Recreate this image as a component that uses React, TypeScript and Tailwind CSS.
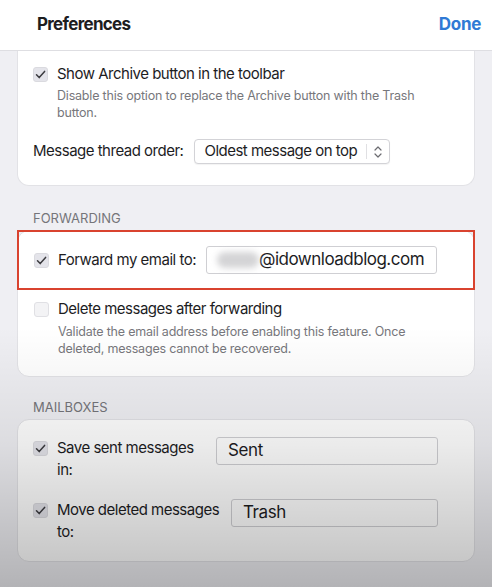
import React from "react";

const Check = ({ checked = true }: { checked?: boolean }) => (
  <div
    className={
      "w-[15px] h-[15px] shrink-0 rounded-[3px] border flex items-center justify-center " +
      (checked ? "bg-[#e4e4ea] border-[#dadadf]" : "bg-[#f3f3f5] border-[#e0e0e4]")
    }
  >
    {checked && (
      <svg width="13" height="13" viewBox="0 0 13 13" fill="none">
        <path d="M2.5 6.8 L5.2 9.6 L10.6 3.4" stroke="#3c3c40" strokeWidth="1.5" strokeLinecap="round" strokeLinejoin="round" />
      </svg>
    )}
  </div>
);

export default function App() {
  return (
    <div
      className="relative w-[492px] h-[587px] overflow-hidden bg-[#efeff3] text-[#1d1d1f]"
      style={{ fontFamily: "Inter, 'Liberation Sans', sans-serif" }}
    >
      <header className="h-[51px] bg-white border-b border-[#dedee2] flex items-center justify-between pl-[37px] pr-[11px]">
        <h1 className="text-[17px] font-bold tracking-[-0.7px]">Preferences</h1>
        <span className="text-[17px] font-bold text-[#2f7ad5] tracking-[-0.3px]">Done</span>
      </header>

      <div className="px-[17px]">
        {/* Card 1 */}
        <section className="bg-white rounded-b-[12px] border-x border-b border-[#e2e2e6] pl-[15px] pr-[20px] pt-[12px] pb-[21px]">
          <div className="flex items-center gap-[9px] h-[22px]">
            <Check />
            <span className="text-[15px] tracking-[-0.5px]">Show Archive button in the toolbar</span>
          </div>
          <p className="pl-[24px] pr-[20px] mt-[2px] text-[12.5px] leading-[17px] text-[#77777c] tracking-[-0.2px]">
            Disable this option to replace the Archive button with the Trash button.
          </p>
          <div className="flex items-center gap-[11px] mt-[18px]">
            <span className="text-[15px] tracking-[-0.5px]">Message thread order:</span>
            <div className="h-[25px] w-[196px] border border-[#d3d3d7] rounded-[4px] bg-white flex items-center pl-[9px] pr-[6px] shadow-[0_1px_1px_rgba(0,0,0,0.05)]">
              <span className="text-[15px] flex-1 tracking-[-0.5px] whitespace-nowrap">Oldest message on top</span>
              <div className="w-px h-[15px] bg-[#e0e0e3] mr-[6px]" />
              <svg width="10" height="14" viewBox="0 0 10 14" fill="none">
                <path d="M2 5 L5 2 L8 5" stroke="#6b6b70" strokeWidth="1.2" strokeLinecap="round" strokeLinejoin="round" />
                <path d="M2 9 L5 12 L8 9" stroke="#6b6b70" strokeWidth="1.2" strokeLinecap="round" strokeLinejoin="round" />
              </svg>
            </div>
          </div>
        </section>

        <div className="pl-[16px] pt-[23px] pb-[5px] text-[13px] text-[#75757a] tracking-[0px] h-[44px]">FORWARDING</div>

        {/* Card 2 */}
        <section className="bg-white rounded-[12px] border border-[#e2e2e6] pb-[19px]">
          <div className="h-[60px] -mx-px -mt-px border-2 border-[#d9432f] flex items-center pl-[15px] pr-[36px]">
            <Check />
            <span className="ml-[9px] text-[15px] tracking-[-0.5px]">Forward my email to:</span>
            <div className="ml-auto h-[28px] w-[231px] border border-[#cfcfd3] rounded-[3px] bg-white flex items-center pl-[10px]">
              <div className="w-[42px] h-[16px] rounded-full bg-[#d4d4d6] blur-[3px]" />
              <span className="text-[17px] tracking-[-0.5px]">@idownloadblog.com</span>
            </div>
          </div>
          <div className="flex items-center gap-[9px] pl-[16px] mt-[8px] h-[22px]">
            <Check checked={false} />
            <span className="text-[15px] tracking-[-0.5px]">Delete messages after forwarding</span>
          </div>
          <p className="pl-[40px] pr-[60px] mt-[3px] text-[12.5px] leading-[17px] text-[#77777c] tracking-[-0.2px]">
            Validate the email address before enabling this feature. Once deleted, messages cannot be recovered.
          </p>
        </section>

        <div className="pl-[16px] pt-[21px] text-[13px] text-[#75757a] tracking-[0px] h-[42px]">MAILBOXES</div>

        {/* Card 3 */}
        <section className="bg-white rounded-[12px] border border-[#e2e2e6] pl-[15px] pr-[36px] pt-[17px] pb-[18px] flex flex-col gap-[18px]">
          <div className="flex items-start">
            <div className="mt-[4px]"><Check /></div>
            <span className="ml-[9px] w-[146px] text-[15px] leading-[22px] tracking-[-0.5px]">Save sent messages in:</span>
            <div className="ml-auto h-[28px] w-[222px] border border-[#cfcfd3] rounded-[3px] bg-white flex items-center pl-[11px] text-[17px] tracking-[-0.4px]">
              Sent
            </div>
          </div>
          <div className="flex items-start">
            <div className="mt-[4px]"><Check /></div>
            <span className="ml-[9px] w-[164px] text-[15px] leading-[22px] tracking-[-0.5px]">Move deleted messages to:</span>
            <div className="ml-auto h-[28px] w-[207px] border border-[#cfcfd3] rounded-[3px] bg-white flex items-center pl-[11px] text-[17px] tracking-[-0.4px]">
              Trash
            </div>
          </div>
        </section>
      </div>

      {/* dimming overlay */}
      <div className="pointer-events-none absolute inset-x-0 bottom-0 h-[260px] bg-[linear-gradient(to_bottom,rgba(0,0,0,0)_0%,rgba(0,0,0,0.08)_45%,rgba(0,0,0,0.25)_100%)]" />
    </div>
  );
}
